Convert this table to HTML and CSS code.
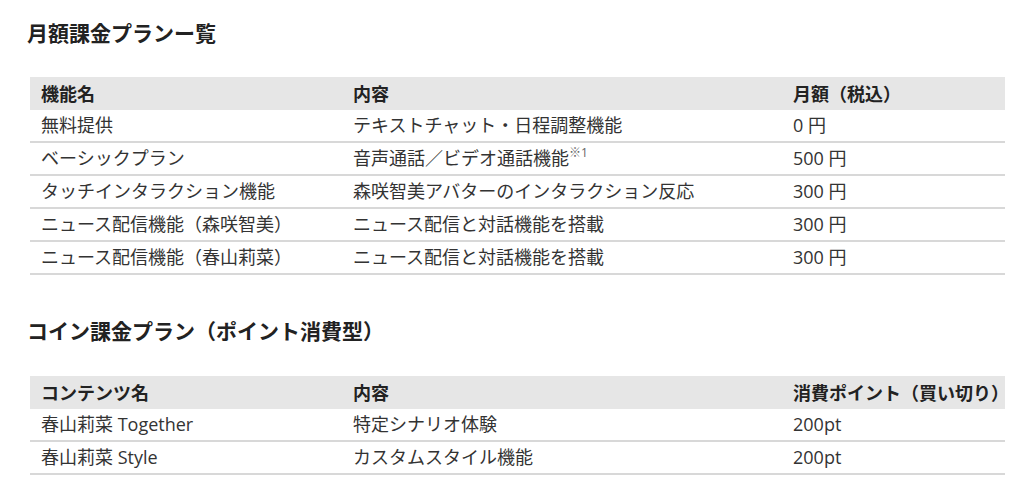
FILE: index.html
```html
<!DOCTYPE html>
<html lang="ja">
<head>
<meta charset="utf-8">
<link rel="stylesheet" href="styles.css">
</head>
<body>
<main class="page">
  <section class="block">
    <h2 class="title">月額課金プランー覧</h2>
    <table class="plan">
      <colgroup><col class="c1"><col class="c2"><col class="c3"></colgroup>
      <thead>
        <tr><th>機能名</th><th>内容</th><th>月額（税込）</th></tr>
      </thead>
      <tbody>
        <tr><td>無料提供</td><td>テキストチャット・日程調整機能</td><td>0 円</td></tr>
        <tr><td>ベーシックプラン</td><td>音声通話／ビデオ通話機能<sup class="note">※1</sup></td><td>500 円</td></tr>
        <tr><td>タッチインタラクション機能</td><td>森咲智美アバターのインタラクション反応</td><td>300 円</td></tr>
        <tr><td>ニュース配信機能（森咲智美）</td><td>ニュース配信と対話機能を搭載</td><td>300 円</td></tr>
        <tr><td>ニュース配信機能（春山莉菜）</td><td>ニュース配信と対話機能を搭載</td><td>300 円</td></tr>
      </tbody>
    </table>
  </section>
  <section class="block second">
    <h2 class="title">コイン課金プラン（ポイント消費型）</h2>
    <table class="plan">
      <colgroup><col class="c1"><col class="c2"><col class="c3"></colgroup>
      <thead>
        <tr><th>コンテンツ名</th><th>内容</th><th>消費ポイント（買い切り）</th></tr>
      </thead>
      <tbody>
        <tr><td>春山莉菜 Together</td><td>特定シナリオ体験</td><td>200pt</td></tr>
        <tr><td>春山莉菜 Style</td><td>カスタムスタイル機能</td><td>200pt</td></tr>
      </tbody>
    </table>
  </section>
</main>
</body>
</html>
```

FILE: styles.css
```css
html, body {
  margin: 0;
  padding: 0;
  background: #ffffff;
}
body {
  font-family: "Open Sans", "Noto Sans CJK JP", sans-serif;
  color: #333333;
}
.page {
  padding: 17px 19px 0 27px;
}
.block {
  display: flex;
  flex-direction: column;
}
.second {
  margin-top: 40px;
}
.title {
  margin: 0;
  font-size: 21px;
  line-height: 32px;
  font-weight: 700;
  color: #222222;
}
.plan {
  margin: 28px 0 0 3px;
  width: 975px;
  border-collapse: separate;
  border-spacing: 0;
  table-layout: fixed;
  font-size: 18px;
}
.second .plan {
  margin-top: 29px;
}
.c1 { width: 312px; }
.c2 { width: 440px; }
.c3 { width: 223px; }
.plan th {
  background: #e6e6e6;
  text-align: left;
  font-weight: 700;
  padding: 2px 0 0 11px;
  line-height: 31px;
  color: #222222;
  white-space: nowrap;
}
.plan td {
  padding: 0 0 0 11px;
  line-height: 31px;
  border-bottom: 2px solid #d8d8d8;
  white-space: nowrap;
}
.note {
  font-size: 12px;
  color: #666666;
  vertical-align: 8px;
  line-height: 0;
}
```
